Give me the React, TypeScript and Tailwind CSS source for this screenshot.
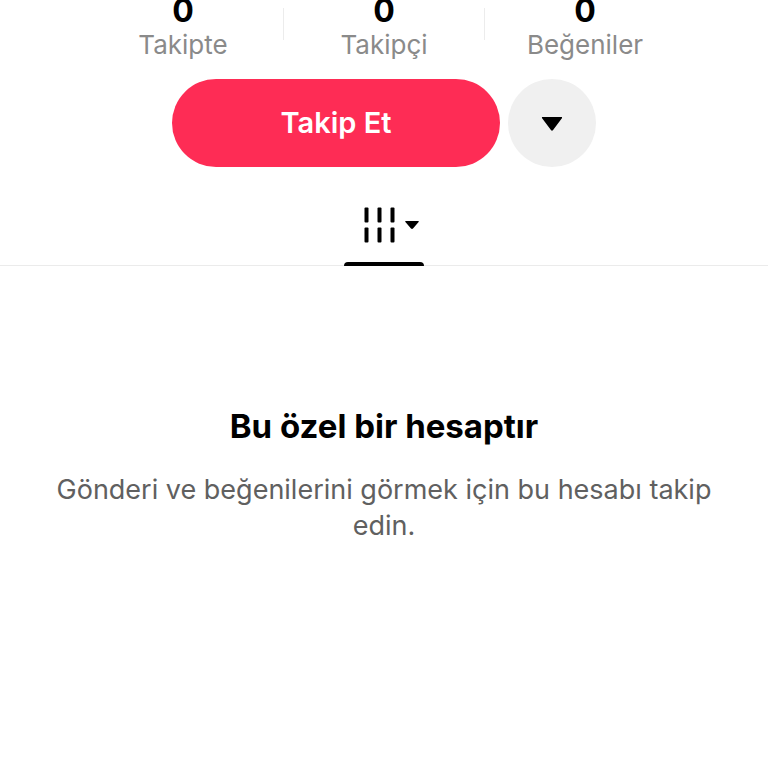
const stats = [
  { label: 'Takipte', value: 0 },
  { label: 'Takipçi', value: 0 },
  { label: 'Beğeniler', value: 0 },
]

function ProfileStats() {
  return (
    <div className="flex items-start justify-center">
      {stats.map((s, i) => (
        <div key={s.label} className="flex items-start">
          {i > 0 && <div className="mt-2 h-8 w-px bg-[#ececec]" />}
          <div className="flex w-[200px] flex-col items-center">
            <span className="text-[32px] leading-[22px] font-bold text-black">{s.value}</span>
            <span className="mt-[7px] text-[26px] leading-8 text-[#8a8a8a]">{s.label}</span>
          </div>
        </div>
      ))}
    </div>
  )
}

export default function App() {
  return (
    <main className="min-h-screen overflow-hidden bg-white font-['Inter',sans-serif]">
      <ProfileStats />

      <div className="mt-[18px] flex justify-center gap-2">
        <button className="h-[88px] w-[328px] rounded-full bg-[#fe2c55] text-[29px] font-semibold text-white">
          Takip Et
        </button>
        <button aria-label="Önerilen hesaplar" className="flex size-[88px] items-center justify-center rounded-full bg-[#f0f0f0]">
          <svg width="22" height="18" viewBox="0 0 22 18">
            <path d="M1.5 3h19c.6 0 .8.7.4 1.2l-9 12c-.5.6-1.3.6-1.8 0l-9-12C.7 3.700.9 3 1.500 3z" fill="#000" />
          </svg>
        </button>
      </div>

      <div className="mt-6 flex justify-center border-b border-[#ebebeb]">
        <button aria-label="Gönderiler" className="-mb-px flex h-[75px] w-20 flex-col items-center justify-end">
          <span className="flex items-center gap-2 pl-4">
            <svg width="32" height="36" viewBox="0 0 32 36" fill="#000">
              <rect x="0.5" y="0.5" width="4" height="15" rx="1" />
              <rect x="13.5" y="0.5" width="4" height="15" rx="1" />
              <rect x="26.5" y="0.5" width="4" height="15" rx="1" />
              <rect x="0.5" y="20.5" width="4" height="15" rx="1" />
              <rect x="13.5" y="20.5" width="4" height="15" rx="1" />
              <rect x="26.5" y="20.5" width="4" height="15" rx="1" />
            </svg>
            <svg width="16" height="10" viewBox="0 0 16 10">
              <path d="M1.8 1h12.4c.5 0 .7.6.4 1L9 8.500c-.5.6-1.500.6-2 0L1.400 2c-.3-.4-.1-1 .4-1z" fill="#000" />
            </svg>
          </span>
          <span className="mt-[19px] h-1 w-full rounded-t-full bg-black" />
        </button>
      </div>

      <section className="px-10 pt-[140px] text-center">
        <h1 className="text-[33px] leading-10 font-bold text-black">Bu özel bir hesaptır</h1>
        <p className="mt-[26px] text-[27px] leading-9 text-[#606060]">
          Gönderi ve beğenilerini görmek için bu hesabı takip edin.
        </p>
      </section>
    </main>
  )
}
